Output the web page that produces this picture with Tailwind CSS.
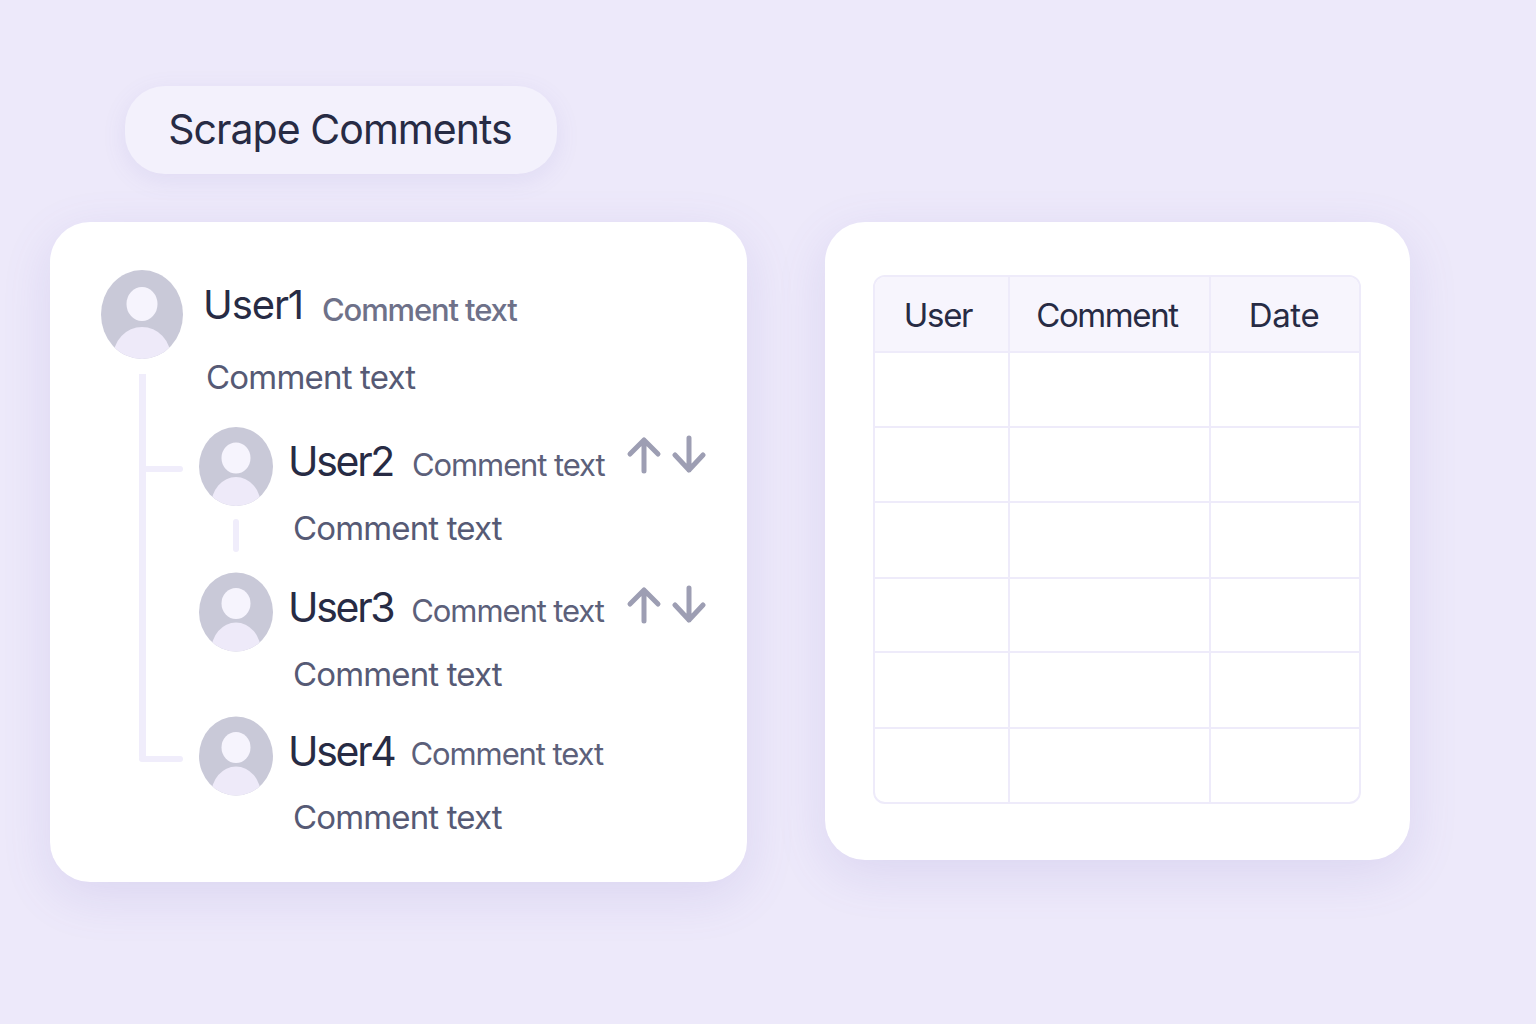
<!DOCTYPE html>
<html lang="en">
<head>
  <meta charset="UTF-8">
  <title>Scrape Comments</title>
  <script src="https://cdn.jsdelivr.net/npm/@tailwindcss/browser@4"></script>
</head>
<body class="bg-[#ede9fa] font-[Inter,sans-serif] h-[1024px] w-[1536px] overflow-hidden">

  <div class="pt-[86px] pl-[50px]">
    <!-- Button -->
    <button class="ml-[75px] w-[432px] h-[88px] rounded-[40px] bg-[#f3f1fc] text-[#272b44] text-[41px] tracking-[-0.95px] pr-[2px] shadow-[0_6px_24px_rgba(110,100,190,0.10)]">Scrape Comments</button>

    <div class="flex items-start gap-[78px] mt-[48px]">

      <!-- Comment tree -->
      <div class="relative w-[697px] h-[660px] rounded-[40px] bg-white pt-[48px] pl-[51px] shadow-[0_14px_50px_rgba(110,100,190,0.14)]">
        <!-- connector lines -->
        <div class="absolute left-[89px] top-[152px] w-[7px] h-[388px] bg-[#f0edfb] rounded-bl-[6px]"></div>
        <div class="absolute left-[89px] top-[534px] w-[44px] h-[6px] bg-[#f0edfb] rounded-[3px]"></div>
        <div class="absolute left-[94px] top-[244px] w-[39px] h-[6px] bg-[#f0edfb] rounded-[3px]"></div>
        <div class="absolute left-[183px] top-[297px] w-[6px] h-[33px] bg-[#f0edfb] rounded-[3px]"></div>

        <div class="flex h-[89px]">
          <svg class="w-[82px] h-[89px] shrink-0" viewBox="0 0 82 89">
            <defs><clipPath id="a1"><ellipse cx="41" cy="44.5" rx="41" ry="44.5"/></clipPath></defs>
            <ellipse cx="41" cy="44.5" rx="41" ry="44.5" fill="#c9c9d8"/>
            <ellipse cx="41" cy="34" rx="15.5" ry="17" fill="#f6f4fd"/>
            <ellipse cx="41" cy="88" rx="29" ry="31" fill="#eeeaf9" clip-path="url(#a1)"/>
          </svg>
          <div class="flex items-baseline h-[72px] pt-[5px] ml-[20px]">
            <span class="text-[#272b44] text-[40px] tracking-[-1.1px]">User1</span>
            <span class="ml-[19px] translate-y-[2px] text-[#6e7189] text-[31px] font-medium tracking-[-1.15px]">Comment text</span>
          </div>
        </div>
        <p class="ml-[105px] -mt-[2px] h-[40px] leading-[40px] text-[#565a75] text-[33px] tracking-[-0.8px]">Comment text</p>

        <div class="ml-[98px] mt-[30px]">
          <!-- User2 -->
          <div class="flex h-[79px]">
            <svg class="w-[74px] h-[79px] shrink-0" viewBox="0 0 74 79">
              <defs><clipPath id="a2"><ellipse cx="37" cy="39.5" rx="37" ry="39.5"/></clipPath></defs>
              <ellipse cx="37" cy="39.5" rx="37" ry="39.5" fill="#c9c9d8"/>
              <ellipse cx="37" cy="31" rx="14.5" ry="15.5" fill="#f6f4fd"/>
              <ellipse cx="37" cy="79" rx="25" ry="29" fill="#eeeaf9" clip-path="url(#a2)"/>
            </svg>
            <div class="flex items-baseline h-[64px] pt-[4px] ml-[15px] w-[338px]">
              <span class="text-[#272b44] text-[41px] tracking-[-2.3px]">User2</span>
              <span class="ml-[19px] text-[#5c607a] text-[31px] tracking-[-1.1px]">Comment text</span>
            </div>
            <svg class="w-[80px] h-[40px] mt-[7px] shrink-0" viewBox="0 0 80 40" fill="none" stroke="#9d9eb3" stroke-width="5" stroke-linecap="round" stroke-linejoin="round">
              <path d="M18 37V6M4 20L18 6L32 20"/>
              <path d="M63 4V36M49 21L63 36L77 21"/>
            </svg>
          </div>
          <p class="ml-[94px] mt-[2px] h-[40px] leading-[40px] text-[#565a75] text-[33px] tracking-[-0.85px]">Comment text</p>

          <!-- User3 -->
          <div class="flex h-[80px] mt-[24px]">
            <svg class="w-[74px] h-[80px] shrink-0" viewBox="0 0 74 79">
              <defs><clipPath id="a3"><ellipse cx="37" cy="39.5" rx="37" ry="39.5"/></clipPath></defs>
              <ellipse cx="37" cy="39.5" rx="37" ry="39.5" fill="#c9c9d8"/>
              <ellipse cx="37" cy="31" rx="14.5" ry="15.5" fill="#f6f4fd"/>
              <ellipse cx="37" cy="79" rx="25" ry="29" fill="#eeeaf9" clip-path="url(#a3)"/>
            </svg>
            <div class="flex items-baseline h-[64px] pt-[5px] ml-[15px] w-[338px]">
              <span class="text-[#272b44] text-[41px] tracking-[-2.3px]">User3</span>
              <span class="ml-[18px] text-[#5c607a] text-[31px] tracking-[-1.1px]">Comment text</span>
            </div>
            <svg class="w-[80px] h-[40px] mt-[12px] shrink-0" viewBox="0 0 80 40" fill="none" stroke="#9d9eb3" stroke-width="5" stroke-linecap="round" stroke-linejoin="round">
              <path d="M18 37V6M4 20L18 6L32 20"/>
              <path d="M63 4V36M49 21L63 36L77 21"/>
            </svg>
          </div>
          <p class="ml-[94px] mt-[2px] h-[40px] leading-[40px] text-[#565a75] text-[33px] tracking-[-0.85px]">Comment text</p>

          <!-- User4 -->
          <div class="flex h-[80px] mt-[22px]">
            <svg class="w-[74px] h-[80px] shrink-0" viewBox="0 0 74 79">
              <defs><clipPath id="a4"><ellipse cx="37" cy="39.5" rx="37" ry="39.5"/></clipPath></defs>
              <ellipse cx="37" cy="39.5" rx="37" ry="39.5" fill="#c9c9d8"/>
              <ellipse cx="37" cy="31" rx="14.5" ry="15.5" fill="#f6f4fd"/>
              <ellipse cx="37" cy="79" rx="25" ry="29" fill="#eeeaf9" clip-path="url(#a4)"/>
            </svg>
            <div class="flex items-baseline h-[64px] pt-[5px] ml-[15px]">
              <span class="text-[#272b44] text-[41px] tracking-[-2.3px]">User4</span>
              <span class="ml-[16px] -translate-y-[1px] text-[#5c607a] text-[31px] tracking-[-1.1px]">Comment text</span>
            </div>
          </div>
          <p class="ml-[94px] mt-[1px] h-[40px] leading-[40px] text-[#565a75] text-[33px] tracking-[-0.85px]">Comment text</p>
        </div>
      </div>

      <!-- Table -->
      <div class="w-[585px] h-[638px] rounded-[40px] bg-white pt-[53px] pl-[48px] shadow-[0_14px_50px_rgba(110,100,190,0.14)]">
        <div class="w-[488px] h-[529px] border-2 border-[#eeebfa] rounded-[12px] overflow-hidden grid grid-cols-[135px_201px_1fr] grid-rows-[76px_75px_75px_76px_74px_76px_73px]">
          <div class="bg-[#f7f5fd] border-r-2 border-b-2 border-[#eeebfa] text-[#272b44] text-[33px] tracking-[-1.3px] flex items-center justify-center pt-[4px] pr-[7px]">User</div>
          <div class="bg-[#f7f5fd] border-r-2 border-b-2 border-[#eeebfa] text-[#272b44] text-[33px] tracking-[-1.4px] flex items-center justify-center pt-[4px] pr-[5px]">Comment</div>
          <div class="bg-[#f7f5fd] border-b-2 border-[#eeebfa] text-[#272b44] text-[33px] tracking-[-0.4px] flex items-center justify-center pt-[4px] pr-[2px]">Date</div>

          <div class="border-r-2 border-b-2 border-[#eeebfa]"></div><div class="border-r-2 border-b-2 border-[#eeebfa]"></div><div class="border-b-2 border-[#eeebfa]"></div>
          <div class="border-r-2 border-b-2 border-[#eeebfa]"></div><div class="border-r-2 border-b-2 border-[#eeebfa]"></div><div class="border-b-2 border-[#eeebfa]"></div>
          <div class="border-r-2 border-b-2 border-[#eeebfa]"></div><div class="border-r-2 border-b-2 border-[#eeebfa]"></div><div class="border-b-2 border-[#eeebfa]"></div>
          <div class="border-r-2 border-b-2 border-[#eeebfa]"></div><div class="border-r-2 border-b-2 border-[#eeebfa]"></div><div class="border-b-2 border-[#eeebfa]"></div>
          <div class="border-r-2 border-b-2 border-[#eeebfa]"></div><div class="border-r-2 border-b-2 border-[#eeebfa]"></div><div class="border-b-2 border-[#eeebfa]"></div>
          <div class="border-r-2 border-[#eeebfa]"></div><div class="border-r-2 border-[#eeebfa]"></div><div></div>
        </div>
      </div>

    </div>
  </div>

</body>
</html>
